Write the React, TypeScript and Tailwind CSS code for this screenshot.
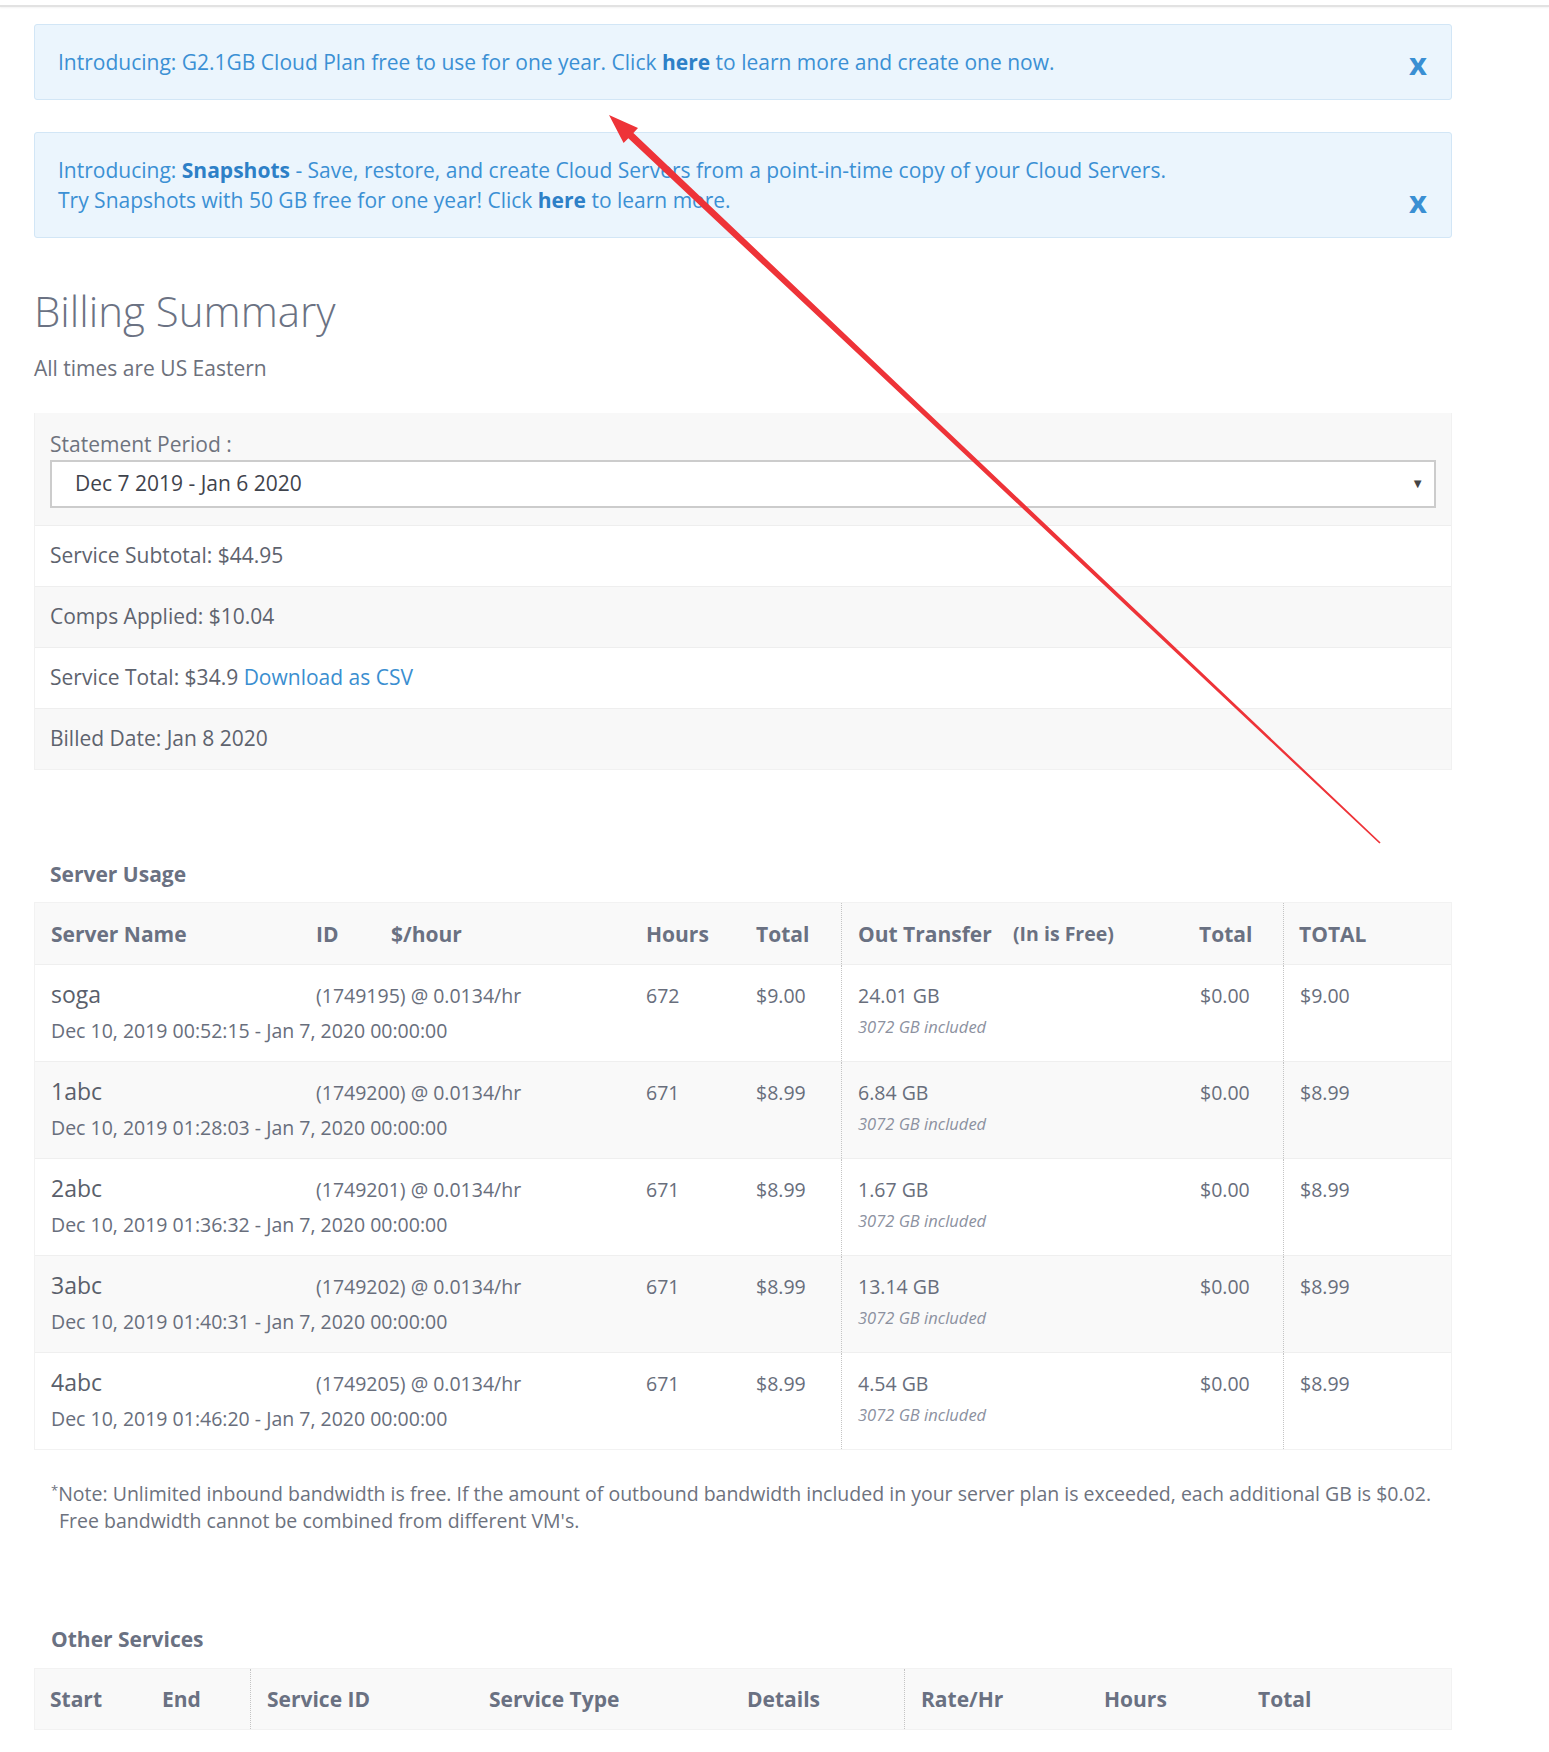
import React from 'react';

type Server = {
  name: string;
  id: string;
  start: string;
  hours: string;
  total: string;
  out: string;
};

const servers: Server[] = [
  { name: 'soga', id: '1749195', start: '00:52:15', hours: '672', total: '$9.00', out: '24.01 GB' },
  { name: '1abc', id: '1749200', start: '01:28:03', hours: '671', total: '$8.99', out: '6.84 GB' },
  { name: '2abc', id: '1749201', start: '01:36:32', hours: '671', total: '$8.99', out: '1.67 GB' },
  { name: '3abc', id: '1749202', start: '01:40:31', hours: '671', total: '$8.99', out: '13.14 GB' },
  { name: '4abc', id: '1749205', start: '01:46:20', hours: '671', total: '$8.99', out: '4.54 GB' },
];

const Alert: React.FC<{ children: React.ReactNode; tall?: boolean }> = ({ children, tall }) => (
  <div
    className={`flex justify-between rounded-[3px] border border-[#d2e6f6] bg-[#ebf5fd] py-[22px] pl-[23px] pr-[24px] text-[21px] leading-[30px] text-[#3b90d4] ${
      tall ? 'items-end' : 'items-center'
    }`}
  >
    <div>{children}</div>
    <span className="relative top-[1px] font-bold text-[31px] leading-[30px] text-[#3a8fd3]">x</span>
  </div>
);

const SummaryRow: React.FC<{ children: React.ReactNode; gray?: boolean }> = ({ children, gray }) => (
  <div
    className={`flex h-[61px] items-center border-t border-[#eeeeee] px-[15px] text-[21px] text-[#5e636e] ${
      gray ? 'bg-[#f8f8f8]' : 'bg-white'
    }`}
  >
    {children}
  </div>
);

const serverCols = 'grid grid-cols-[265px_330px_110px_101px_344px_98px_170px]';
const otherCols = 'grid grid-cols-[111px_104px_223px_258px_173px_184px_154px_211px]';
const divider = 'border-l border-dotted border-[#c4c4c4]';

export default function App() {
  return (
    <div className="relative min-h-[1752px] w-[1549px] bg-white font-['Open_Sans',sans-serif]">
      <div className="h-[7px] border-b-2 border-[#e2e2e2] shadow-[0_1px_2px_rgba(0,0,0,0.05)]" />

      <div className="ml-[34px] w-[1418px]">
        <div className="mt-[17px]">
          <Alert>
            Introducing: G2.1GB Cloud Plan free to use for one year. Click{' '}
            <b className="text-[#2d80c7]">here</b> to learn more and create one now.
          </Alert>
        </div>
        <div className="mt-[32px]">
          <Alert tall>
            Introducing: <b className="text-[#2d80c7]">Snapshots</b> - Save, restore, and create Cloud Servers from a
            point-in-time copy of your Cloud Servers.
            <br />
            Try Snapshots with 50 GB free for one year! Click <b className="text-[#2d80c7]">here</b> to learn more.
          </Alert>
        </div>

        <h1 className="mt-[48px] text-[42px] font-light leading-[50px] text-[#6b7283]">Billing Summary</h1>
        <p className="mt-[18px] text-[21px] leading-[28px] text-[#6d717c]">All times are US Eastern</p>

        <div className="mt-[31px] border-x border-b border-[#f1f1f1] bg-[#f8f8f8]">
          <div className="px-[15px] pt-[17px] pb-[17px]">
            <div className="text-[21px] leading-[28px] text-[#6e737e]">Statement Period :</div>
            <div className="mt-[2px] flex h-[48px] items-center justify-between border-2 border-[#cccccc] bg-white pl-[23px] pr-[10px] text-[21px] text-[#3f434c]">
              <span>Dec 7 2019 - Jan 6 2020</span>
              <span className="text-[13px] text-[#444]">▼</span>
            </div>
          </div>
          <SummaryRow>Service Subtotal: $44.95</SummaryRow>
          <SummaryRow gray>Comps Applied: $10.04</SummaryRow>
          <SummaryRow>
            Service Total: $34.9&nbsp;<span className="text-[#3a8ed0]">Download as CSV</span>
          </SummaryRow>
          <SummaryRow gray>Billed Date: Jan 8 2020</SummaryRow>
        </div>

        <h2 className="mt-[90px] pl-[16px] text-[21px] font-bold leading-[28px] text-[#6a7182]">Server Usage</h2>

        <div className="mt-[14px] border border-[#f2f2f2]">
          <div className={`${serverCols} h-[61px] items-center bg-[#f9f9f9] text-[21px] font-bold leading-[28px] text-[#6a7182]`}>
            <div className="pl-[16px]">Server Name</div>
            <div className="pl-[16px]">
              <span className="inline-block w-[75px]">ID</span>$/hour
            </div>
            <div className="pl-[16px]">Hours</div>
            <div className="pl-[16px]">Total</div>
            <div className={`${divider} flex h-full items-center pl-[16px]`}>
              <span className="inline-block w-[155px]">Out Transfer</span>
              <span className="text-[19.5px]">(In is Free)</span>
            </div>
            <div className="pl-[14px]">Total</div>
            <div className={`${divider} flex h-full items-center pl-[15px]`}>TOTAL</div>
          </div>

          {servers.map((s, i) => (
            <div
              key={s.name}
              className={`${serverCols} h-[97px] border-t border-[#efefef] text-[19.5px] text-[#686e7c] ${
                i % 2 === 1 ? 'bg-[#f9f9f9]' : 'bg-white'
              }`}
            >
              <div className="pl-[16px] pt-[9px]">
                <div className="text-[23px] leading-[40px] text-[#5a5f6b]">{s.name}</div>
                <div className="mt-[3px] whitespace-nowrap leading-[28px]">
                  Dec 10, 2019 {s.start} - Jan 7, 2020 00:00:00
                </div>
              </div>
              <div className="pl-[16px] pt-[11px] leading-[40px]">({s.id}) @ 0.0134/hr</div>
              <div className="pl-[16px] pt-[11px] leading-[40px]">{s.hours}</div>
              <div className="pl-[16px] pt-[11px] leading-[40px]">{s.total}</div>
              <div className={`${divider} pl-[16px] pt-[11px]`}>
                <div className="leading-[40px]">{s.out}</div>
                <div className="text-[16.5px] italic leading-[22px] text-[#8c91a0]">3072 GB included</div>
              </div>
              <div className="pl-[15px] pt-[11px] leading-[40px]">$0.00</div>
              <div className={`${divider} pl-[16px] pt-[11px] leading-[40px]`}>{s.total}</div>
            </div>
          ))}
        </div>

        <p className="mt-[30px] pl-[25px] -indent-[8px] text-[19.5px] leading-[27px] text-[#6d727e]">
          <sup className="text-[13px]">*</sup>Note: Unlimited inbound bandwidth is free. If the amount of outbound
          bandwidth included in your server plan is exceeded, each additional GB is $0.02.
          <br />
          Free bandwidth cannot be combined from different VM's.
        </p>

        <h2 className="mt-[91px] pl-[17px] text-[21px] font-bold leading-[28px] text-[#6a7182]">Other Services</h2>

        <div className="mt-[15px] border border-[#f2f2f2]">
          <div className={`${otherCols} h-[60px] items-center bg-[#f9f9f9] text-[21px] font-bold leading-[28px] text-[#6a7182]`}>
            <div className="pl-[15px]">Start</div>
            <div className="pl-[16px]">End</div>
            <div className={`${divider} flex h-full items-center pl-[16px]`}>Service ID</div>
            <div className="pl-[16px]">Service Type</div>
            <div className="pl-[16px]">Details</div>
            <div className={`${divider} flex h-full items-center pl-[16px]`}>Rate/Hr</div>
            <div className="pl-[16px]">Hours</div>
            <div className="pl-[16px]">Total</div>
          </div>
        </div>
      </div>

      {/* red annotation arrow drawn on the screenshot */}
      <svg className="pointer-events-none absolute left-0 top-0" width="1549" height="1752" viewBox="0 0 1549 1752">
        <polygon
          points="609,115 638,128 633.4,133.1 1380.6,842.4 1379.4,843.6 628.3,138.2 623.6,143"
          fill="#ee3338"
        />
      </svg>
    </div>
  );
}
